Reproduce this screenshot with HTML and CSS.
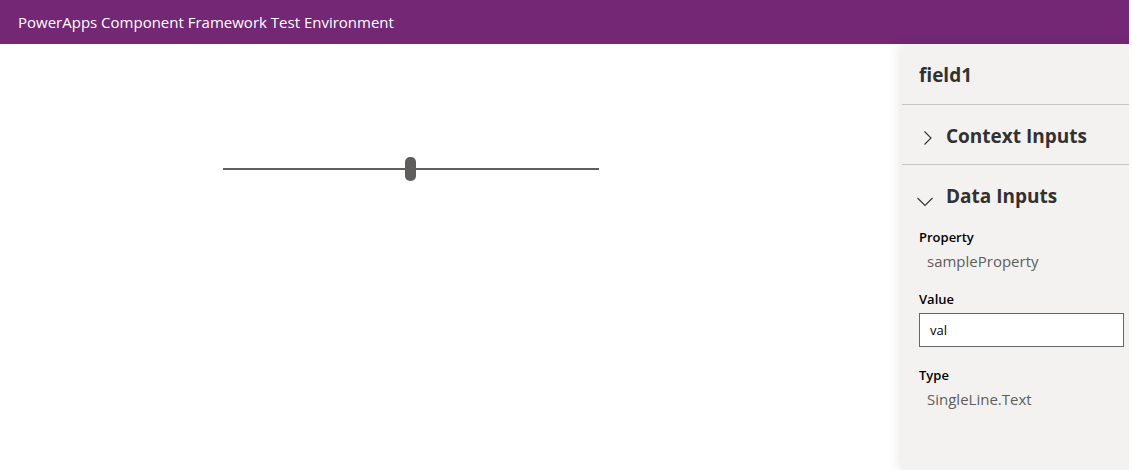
FILE: index.html
```html
<!DOCTYPE html>
<html>
<head>
<meta charset="utf-8">
<link rel="stylesheet" href="styles.css">
</head>
<body>
<header class="topbar">PowerApps Component Framework Test Environment</header>
<div class="main">
  <section class="canvas">
    <div class="slider">
      <div class="track"></div>
      <div class="thumb"></div>
    </div>
  </section>
  <aside class="panel">
    <div class="panel-title">field1</div>
    <div class="section-head">
      <svg class="chev" width="10" height="14" viewBox="0 0 10 14"><path d="M1.5 0.5 L8 7 L1.5 13.5" fill="none" stroke="#323130" stroke-width="1.1"/></svg>
      <span>Context Inputs</span>
    </div>
    <div class="section-head open">
      <svg class="chev down" width="16" height="10" viewBox="0 0 16 10"><path d="M0.5 1 L8 8.5 L15.5 1" fill="none" stroke="#323130" stroke-width="1.1"/></svg>
      <span>Data Inputs</span>
    </div>
    <div class="fields">
      <div class="lbl">Property</div>
      <div class="val">sampleProperty</div>
      <div class="lbl lbl-value">Value</div>
      <div class="input">val</div>
      <div class="lbl lbl-type">Type</div>
      <div class="val">SingleLine.Text</div>
    </div>
  </aside>
</div>
</body>
</html>
```
FILE: styles.css
```css
html, body {
  margin: 0;
  padding: 0;
  height: 100%;
  overflow: hidden;
  background: #ffffff;
  font-family: "Open Sans", "Noto Sans", sans-serif;
}
.topbar {
  height: 44px;
  background: #742774;
  color: #ffffff;
  font-size: 15px;
  line-height: 44px;
  padding-left: 18px;
  box-sizing: border-box;
  width: 1129px;
}
.main {
  display: flex;
  height: 426px;
  width: 1129px;
}
.canvas {
  flex: 1;
  padding-top: 113px;
  padding-left: 223px;
}
.slider {
  position: relative;
  width: 376px;
  height: 24px;
}
.track {
  position: absolute;
  left: 0;
  right: 0;
  top: 11px;
  height: 2px;
  background: #605e5c;
}
.thumb {
  position: absolute;
  left: 182px;
  top: 0;
  width: 11px;
  height: 24px;
  border-radius: 5px;
  background: #605e5c;
}
.panel {
  width: 227px;
  background: #f3f2f1;
  box-shadow: -4px 0 10px rgba(0,0,0,0.08);
  color: #323130;
}
.panel-title {
  height: 61px;
  box-sizing: border-box;
  padding-left: 17px;
  padding-top: 2px;
  line-height: 58px;
  font-size: 19px;
  font-weight: 700;
  border-bottom: 1px solid #c8c6c4;
}
.section-head {
  height: 60px;
  box-sizing: border-box;
  display: flex;
  align-items: center;
  padding-left: 21px;
  padding-top: 3px;
  font-size: 19px;
  font-weight: 700;
  border-bottom: 1px solid #c8c6c4;
}
.section-head.open {
  border-bottom: none;
  padding-left: 15px;
  padding-top: 2px;
}
.chev {
  margin-right: 13px;
  margin-top: 4px;
}
.chev.down {
  margin-right: 13px;
  margin-top: 11px;
}
.fields {
  padding: 2px 5px 0 17px;
}
.lbl {
  font-size: 13px;
  font-weight: 600;
  color: #000000;
  line-height: 20px;
}
.val {
  font-size: 15px;
  color: #605e5c;
  padding-left: 8px;
  line-height: 22px;
  margin-top: 3px;
}
.lbl-value {
  margin-top: 17px;
}
.lbl-type {
  margin-top: 18px;
}
.input {
  margin-top: 4px;
  height: 34px;
  box-sizing: border-box;
  border: 1px solid #666666;
  background: #ffffff;
  font-size: 13px;
  line-height: 32px;
  padding-left: 10px;
  color: #000000;
}
```
